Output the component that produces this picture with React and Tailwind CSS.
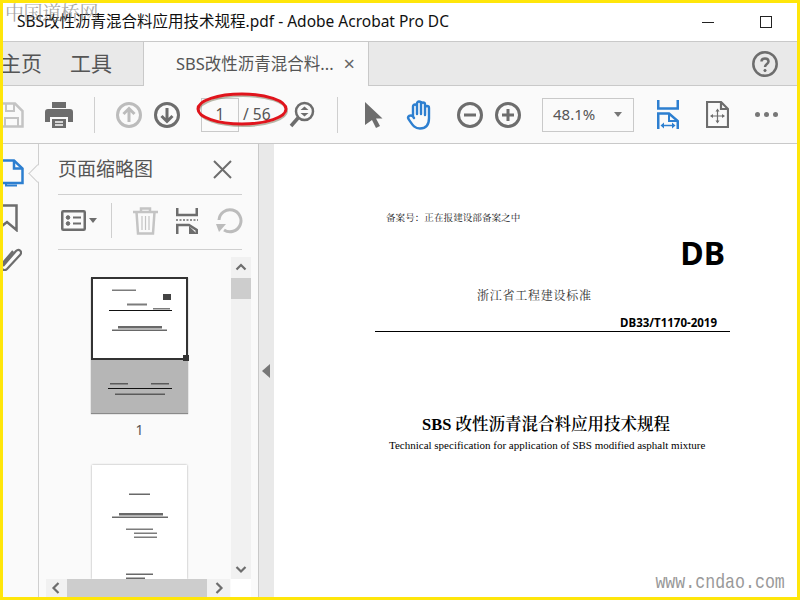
const CJK = '"Noto Sans", "Noto Sans CJK SC", sans-serif'
const SERIF = '"Liberation Serif", "Noto Serif CJK SC", "Noto Sans CJK SC", serif'

function CircleIcon({ color = '#6d6d6d', size = 28, children }) {
  return (
    <svg width={size} height={size} viewBox="0 0 28 28" fill="none" stroke={color} strokeWidth="3" className="shrink-0">
      <circle cx="14" cy="14" r="11.5" />
      {children}
    </svg>
  )
}

function Divider({ h = 'h-[36px]' }) {
  return <div className={`w-px bg-[#cfcfcf] shrink-0 ${h}`} />
}

function Toolbar() {
  return (
    <div className="h-[58px] bg-[#fafafa] border-b border-[#c9c9c9] flex items-center shrink-0 overflow-hidden">
      {/* save, cut off at left edge */}
      <svg width="21" height="26" viewBox="0 0 21 26" fill="none" stroke="#c4c4c4" strokeWidth="2.5" className="shrink-0">
        <path d="M-6 1.5H12L19.5 9V24.5H-6Z" />
        <path d="M3 2V9H11V2M2 24V16H15V24" strokeWidth="2" />
      </svg>
      <svg width="28" height="26" viewBox="0 0 28 26" className="ml-[21px] shrink-0">
        <path d="M7 0H21V6H7Z" fill="#6d6d6d" />
        <path d="M3 7H25Q28 7 28 10V20H23V15H5V20H0V10Q0 7 3 7Z" fill="#6d6d6d" />
        <path d="M7 17H21V26H7Z" fill="#6d6d6d" />
        <path d="M10 20H18M10 23H18" stroke="#fafafa" strokeWidth="1.5" />
      </svg>
      <div className="ml-[21px]"><Divider /></div>
      <div className="ml-[20px]">
        <CircleIcon color="#bcbcbc">
          <path d="M14 21V8M8.5 13L14 7.5L19.5 13" />
        </CircleIcon>
      </div>
      <div className="ml-[10px]">
        <CircleIcon>
          <path d="M14 7V20M8.5 15L14 20.5L19.5 15" />
        </CircleIcon>
      </div>
      <div className="ml-[20px] w-[38px] h-[34px] border border-[#c9c9c9] flex items-center justify-center text-[15.5px] text-[#555] shrink-0">1</div>
      <span className="ml-[4px] w-[46px] text-[15.5px] text-[#555] shrink-0">/ 56</span>
      <svg width="26" height="27" viewBox="0 0 26 27" fill="none" stroke="#6d6d6d" strokeWidth="2.5" className="shrink-0">
        <circle cx="15.5" cy="10.5" r="8.5" />
        <path d="M9 17L2 25" strokeWidth="3.5" />
        <path d="M11.5 9L15.5 5.5L19.5 9ZM11.5 12L15.5 15.5L19.5 12Z" fill="#6d6d6d" stroke="none" />
      </svg>
      <div className="ml-[22px]"><Divider /></div>
      <svg width="18" height="26" viewBox="0 0 18 26" className="ml-[27px] shrink-0">
        <path d="M0 0L17.5 16.5H11L15 24L11 26L7 18L0 23Z" fill="#6d6d6d" />
      </svg>
      <svg width="29" height="30" viewBox="0 0 29 30" fill="none" stroke="#2d7fd0" strokeWidth="2.4" strokeLinecap="round" strokeLinejoin="round" className="ml-[23px] shrink-0">
        <path d="M7 16V6.5a2 2 0 0 1 4 0V14M11 14V3.5a2 2 0 0 1 4 0V14M15 14V4.5a2 2 0 0 1 4 0V14M19 15V8a2 2 0 0 1 4 0V18C23 25 19.500 28.500 14 28.500 8 28.500 6 24 2.500 19 1 16.500 4.500 14 7 16.500L8 18" />
      </svg>
      <div className="ml-[21px]">
        <CircleIcon>
          <path d="M8 14H20" />
        </CircleIcon>
      </div>
      <div className="ml-[10px]">
        <CircleIcon>
          <path d="M8 14H20M14 8V20" />
        </CircleIcon>
      </div>
      <div className="ml-[20px] w-[92px] h-[34px] border border-[#c9c9c9] flex items-center justify-between pl-[10px] pr-[11px] text-[15px] text-[#555] shrink-0">
        <span>48.1%</span>
        <span className="w-0 h-0 border-x-[4px] border-x-transparent border-t-[5px] border-t-[#777]" />
      </div>
      <svg width="22" height="30" viewBox="0 0 22 30" className="ml-[23px] shrink-0" fill="none" stroke="#2d7fd0" strokeWidth="2.5">
        <path d="M1.250 0V8.500H20.750V0" />
        <path d="M1.250 29V13.500H12L20.750 21V29" />
        <path d="M12 14V21H20" strokeWidth="2" />
        <path d="M5 25.500H17" strokeWidth="1.500" />
        <path d="M7 22.500L3.500 25.500L7 28.500ZM15 22.500L18.500 25.500L15 28.500Z" fill="#2d7fd0" stroke="none" />
      </svg>
      <svg width="23" height="27" viewBox="0 0 23 27" className="ml-[27px] shrink-0" fill="none" stroke="#6d6d6d" strokeWidth="2.2">
        <path d="M1 1H15L22 8V26H1Z" />
        <path d="M15 1V8H22" />
        <path d="M11.500 9V21M5.500 15H17.500" strokeWidth="1.200" />
        <path d="M9.500 10.500L11.500 7.500L13.500 10.500ZM9.500 19.500L11.500 22.500L13.500 19.500ZM7 13L4 15L7 17ZM16 13L19 15L16 17Z" fill="#6d6d6d" stroke="none" />
      </svg>
      <div className="ml-[26px] flex gap-[4px] shrink-0">
        <span className="w-[5px] h-[5px] rounded-full bg-[#777]" />
        <span className="w-[5px] h-[5px] rounded-full bg-[#777]" />
        <span className="w-[5px] h-[5px] rounded-full bg-[#777]" />
      </div>
    </div>
  )
}

function Rail() {
  return (
    <div className="w-[36px] shrink-0 bg-[#fafafa] border-r border-[#cfcfcf] relative z-10 flex flex-col pt-[15px]">
      <svg width="21" height="28" viewBox="0 0 21 28" fill="none" stroke="#2d7fd0" strokeWidth="2.5" className="shrink-0">
        <path d="M-5 1.500H11L19.500 9.500V24H-5Z" />
        <path d="M11 1.500V9.500H19" />
        <path d="M3 24V26.500H14" strokeWidth="2" />
      </svg>
      <svg width="15" height="28" viewBox="0 0 15 28" fill="none" stroke="#6d6d6d" strokeWidth="2.500" className="shrink-0 mt-[17px]">
        <path d="M-5 1.500H13.500V26L4 18L-5 25" />
      </svg>
      <svg width="19" height="28" viewBox="0 0 19 28" fill="none" stroke="#6d6d6d" strokeWidth="2.200" className="shrink-0 mt-[11px]">
        <path d="M0 23L13 8C16 5 20 9 17 12L4 26C1 29 -4 25 -1 21L10 8" />
      </svg>
      {/* pointer toward the open panel */}
      <span className="absolute right-[-6px] top-[23px] w-[13px] h-[13px] rotate-45 bg-[#fafafa] border-l border-b border-[#cfcfcf]" />
    </div>
  )
}

function ThumbOne() {
  return (
    <div className="relative w-[97px] h-[136px] shadow-[0_1px_1px_#8a8a8a] bg-[#b6b6b6] shrink-0">
      <svg width="97" height="136" viewBox="0 0 97 136" className="block">
        <rect x="1" y="1" width="95" height="81" fill="#fff" stroke="#333" strokeWidth="2" />
        <g fill="#444">
          <rect x="21" y="12.500" width="24" height="1.500" opacity="0.700" />
          <rect x="72" y="17" width="8" height="6" />
          <rect x="36" y="26.500" width="20" height="2" opacity="0.700" />
          <rect x="18" y="33" width="63" height="1" fill="#111" />
          <rect x="62" y="31" width="17" height="1.500" opacity="0.700" />
          <rect x="27" y="49" width="44" height="2.500" opacity="0.800" />
          <rect x="21" y="52.500" width="55" height="1.500" opacity="0.800" />
          <rect x="19" y="106" width="18" height="1.500" opacity="0.800" />
          <rect x="60" y="106" width="18" height="1.500" opacity="0.800" />
          <rect x="17" y="111" width="64" height="1" fill="#111" />
          <rect x="24" y="116.500" width="50" height="1.500" opacity="0.800" />
        </g>
      </svg>
      <span className="absolute left-[92px] top-[78px] w-[6px] h-[6px] bg-[#333]" />
    </div>
  )
}

function ThumbTwo() {
  return (
    <div className="w-[95px] h-[114px] bg-white shadow-[0_0_2px_#a5a5a5] shrink-0 mt-[25px] ml-[1px] overflow-hidden">
      <svg width="95" height="114" viewBox="0 0 95 114" className="block">
        <g fill="#444">
          <rect x="37" y="28.500" width="21" height="1.500" opacity="0.800" />
          <rect x="27" y="48" width="44" height="2.500" opacity="0.800" />
          <rect x="20" y="51.500" width="56" height="1.500" opacity="0.800" />
          <rect x="34" y="63.500" width="27" height="1.500" opacity="0.700" />
          <rect x="42" y="67.500" width="23" height="1.500" opacity="0.700" />
          <rect x="42" y="71.500" width="23" height="1.500" opacity="0.700" />
          <rect x="34" y="108.500" width="27" height="1.500" opacity="0.800" />
          <rect x="34" y="112.500" width="19" height="1.500" opacity="0.800" />
        </g>
      </svg>
    </div>
  )
}

function Panel() {
  return (
    <div className="w-[220px] shrink-0 bg-[#fafafa] border-r border-[#c9c9c9] flex flex-col overflow-hidden">
      <div className="ml-[19px] mr-[16px] h-[51px] border-b border-[#cfcfcf] flex items-center justify-between pr-[10px] shrink-0">
        <span className="text-[19px] text-[#555]" style={{ fontFamily: CJK }}>页面缩略图</span>
        <svg width="19" height="19" viewBox="0 0 19 19" stroke="#6d6d6d" strokeWidth="2">
          <path d="M1 1L18 18M18 1L1 18" />
        </svg>
      </div>
      <div className="ml-[19px] mr-[16px] h-[55px] pb-[3px] border-b border-[#cfcfcf] flex items-center shrink-0">
        <svg width="25" height="21" viewBox="0 0 25 21" fill="none" stroke="#6d6d6d" strokeWidth="2.500" className="ml-[3px] shrink-0">
          <rect x="1.250" y="1.250" width="22.500" height="18.500" rx="1" />
          <circle cx="7" cy="7.500" r="1.800" fill="#6d6d6d" strokeWidth="1" />
          <circle cx="7" cy="13.500" r="1.800" fill="#6d6d6d" strokeWidth="1" />
          <path d="M12 7.500H20M12 13.500H20" strokeWidth="2" />
        </svg>
        <span className="ml-[3px] w-0 h-0 border-x-[4px] border-x-transparent border-t-[5px] border-t-[#6d6d6d]" />
        <div className="ml-[14px]"><Divider h="h-[35px]" /></div>
        <svg width="25" height="28" viewBox="0 0 25 28" fill="none" stroke="#c4c4c4" strokeWidth="2.500" className="ml-[21px] shrink-0">
          <path d="M0 5H25M8 5V1.500H17V5" />
          <path d="M3.500 5L5 26.500H20L21.500 5" />
          <path d="M9 9V23M12.500 9V23M16 9V23" strokeWidth="1.200" />
        </svg>
        <svg width="22" height="26" viewBox="0 0 22 26" fill="none" stroke="#6d6d6d" strokeWidth="2.500" className="ml-[18px] shrink-0">
          <path d="M1.250 0V7H20.750V0" />
          <path d="M0 12H22" strokeWidth="1.500" strokeDasharray="2 1.500" />
          <path d="M1.250 26V17H13L20.750 22V26" />
          <path d="M13 18L21 26H13Z" fill="#6d6d6d" stroke="none" />
        </svg>
        <svg width="27" height="27" viewBox="0 0 27 27" fill="none" stroke="#bcbcbc" strokeWidth="3" className="ml-[18px] shrink-0">
          <path d="M8 23A11 11 0 1 0 3 13" strokeWidth="3" />
          <path d="M0 17H10L3 25Z" fill="#bcbcbc" stroke="none" />
        </svg>
      </div>

      <div className="flex flex-1 min-h-0">
        <div className="flex-1 flex flex-col min-w-0 pl-[7px]">
          <div className="flex-1 min-h-0 pt-[27px] pl-[45px] overflow-hidden flex flex-col">
            <ThumbOne />
            <div className="w-[97px] text-center text-[14px] text-[#555] mt-[7px] leading-[20px]">1</div>
            <ThumbTwo />
          </div>
          <div className="h-[18px] bg-[#f1f1f1] flex items-center justify-between shrink-0">
            <svg width="21" height="18" viewBox="0 0 21 18" fill="none" stroke="#6d6d6d" strokeWidth="2.200">
              <path d="M12.500 4L7.500 9L12.500 14" />
            </svg>
            <div className="flex-1 h-full bg-[#cdcdcd]" />
            <svg width="23" height="18" viewBox="0 0 23 18" fill="none" stroke="#6d6d6d" strokeWidth="2.200">
              <path d="M9.500 4L14.500 9L9.500 14" />
            </svg>
          </div>
        </div>
        <div className="w-[20px] ml-[1px] shrink-0 flex flex-col mr-[7px]">
          <div className="flex-1 bg-[#f1f1f1] flex flex-col mt-[7px]">
            <svg width="20" height="21" viewBox="0 0 20 21" fill="none" stroke="#6d6d6d" strokeWidth="2.200" className="shrink-0">
              <path d="M5.500 12.500L10 8L14.500 12.500" />
            </svg>
            <div className="h-[21px] bg-[#cdcdcd] shrink-0" />
            <div className="flex-1" />
            <svg width="20" height="20" viewBox="0 0 20 20" fill="none" stroke="#6d6d6d" strokeWidth="2.200" className="shrink-0">
              <path d="M5.500 8L10 12.500L14.500 8" />
            </svg>
          </div>
          <div className="h-[18px] bg-white shrink-0" />
        </div>
      </div>
    </div>
  )
}

function DocPage() {
  return (
    <div className="flex-1 bg-white min-w-0 overflow-hidden text-black pt-[67px] pl-[101px]">
      <div className="text-[9.6px] leading-[13px] text-[#222] whitespace-nowrap ml-[11px]" style={{ fontFamily: SERIF }}>{'备案号\uFF1A正在报建设部备案之中'}</div>
      <div className="w-[355px] flex justify-end pr-[5px] mt-[9px]">
        <span className="text-[32px] leading-[40px] font-bold text-black" style={{ fontFamily: '"Noto Sans", sans-serif' }}>DB</span>
      </div>
      <div className="text-[12px] leading-[16px] tracking-[0.75px] text-[#333] ml-[102px] mt-[15px] whitespace-nowrap" style={{ fontFamily: SERIF }}>浙江省工程建设标准</div>
      <div className="w-[355px] border-b border-black mt-[12px] pb-[1px] flex justify-end pr-[13px]">
        <span className="text-[11.5px] leading-[14px] font-bold text-black" style={{ fontFamily: '"Noto Sans", sans-serif' }}>DB33/T1170-2019</span>
      </div>
      <div className="text-[16.5px] leading-[20px] text-black ml-[47px] mt-[83px] whitespace-nowrap font-semibold" style={{ fontFamily: SERIF }}>SBS 改性沥青混合料应用技术规程</div>
      <div className="text-[11px] leading-[14px] text-black ml-[14px] mt-[3px] whitespace-nowrap" style={{ fontFamily: SERIF }}>Technical specification for application of SBS modified asphalt mixture</div>
    </div>
  )
}

export default function App() {
  return (
    <div className="relative w-[800px] h-[600px] border-[3px] border-[#ffe60a] bg-white overflow-hidden flex flex-col" style={{ fontFamily: CJK }}>
      {/* title bar */}
      <div className="h-[39px] bg-white border-b border-[#c9c9c9] flex items-center shrink-0 pl-[14px]">
        <span className="text-[15.5px] text-[#111] whitespace-nowrap">SBS改性沥青混合料应用技术规程.pdf - Adobe Acrobat Pro DC</span>
        <div className="ml-auto flex items-center mr-[25px]">
          <span className="w-[12px] h-px bg-[#222]" />
          <span className="ml-[46px] w-[12px] h-[12px] border border-[#222]" />
        </div>
      </div>

      {/* tabs */}
      <div className="h-[44px] bg-[#e9e9e9] border-b border-[#c9c9c9] flex shrink-0">
        <div className="w-[140px] flex items-center text-[21px] text-[#555] overflow-hidden shrink-0">
          <span className="ml-[-3px]">主页</span>
          <span className="ml-[28px]">工具</span>
        </div>
        <div className="w-[226px] h-[44px] bg-[#fafafa] border-x border-[#c9c9c9] flex items-center pl-[32px] text-[16.5px] text-[#555] shrink-0">
          <span className="whitespace-nowrap">SBS改性沥青混合料...</span>
          <span className="ml-[10px] text-[20px] leading-none text-[#666]">×</span>
        </div>
        <div className="ml-auto mr-[19px] self-center">
          <svg width="26" height="26" viewBox="0 0 26 26" fill="none" stroke="#6d6d6d" strokeWidth="2.500">
            <circle cx="13" cy="13" r="11.700" />
            <path d="M9.500 10.500C9.500 6.500 16.500 6.500 16.500 10.500C16.500 13 13 13 13 16" />
            <circle cx="13" cy="19.500" r="1.200" fill="#6d6d6d" strokeWidth="0.800" />
          </svg>
        </div>
      </div>

      <Toolbar />

      {/* main area */}
      <div className="flex flex-1 min-h-0">
        <Rail />
        <Panel />
        <div className="w-[15px] shrink-0 bg-[#e9e9e9] flex items-center pl-[3px]">
          <span className="w-0 h-0 border-y-[7px] border-y-transparent border-r-[8px] border-r-[#777]" />
        </div>
        <DocPage />
      </div>

      {/* annotation and watermarks added over the screenshot */}
      <svg width="100" height="44" viewBox="0 0 100 44" fill="none" className="absolute left-[192px] top-[85px]">
        <ellipse cx="48" cy="23" rx="44" ry="15" stroke="#8a8a70" strokeWidth="2" opacity="0.600" />
        <ellipse cx="47" cy="21" rx="44" ry="15" stroke="#e0141c" strokeWidth="3" />
      </svg>
      <div className="absolute left-[2px] top-[0px] text-[19px] leading-[22px] tracking-[-0.4px] text-[#808080]/70 whitespace-nowrap" style={{ fontFamily: SERIF }}>中国道桥网</div>
      <div className="absolute right-[12px] bottom-[2px] text-[21px] leading-[24px] text-[#999] whitespace-nowrap scale-x-[0.79] origin-right" style={{ fontFamily: '"Liberation Mono", monospace' }}>www.cndao.com</div>
    </div>
  )
}
